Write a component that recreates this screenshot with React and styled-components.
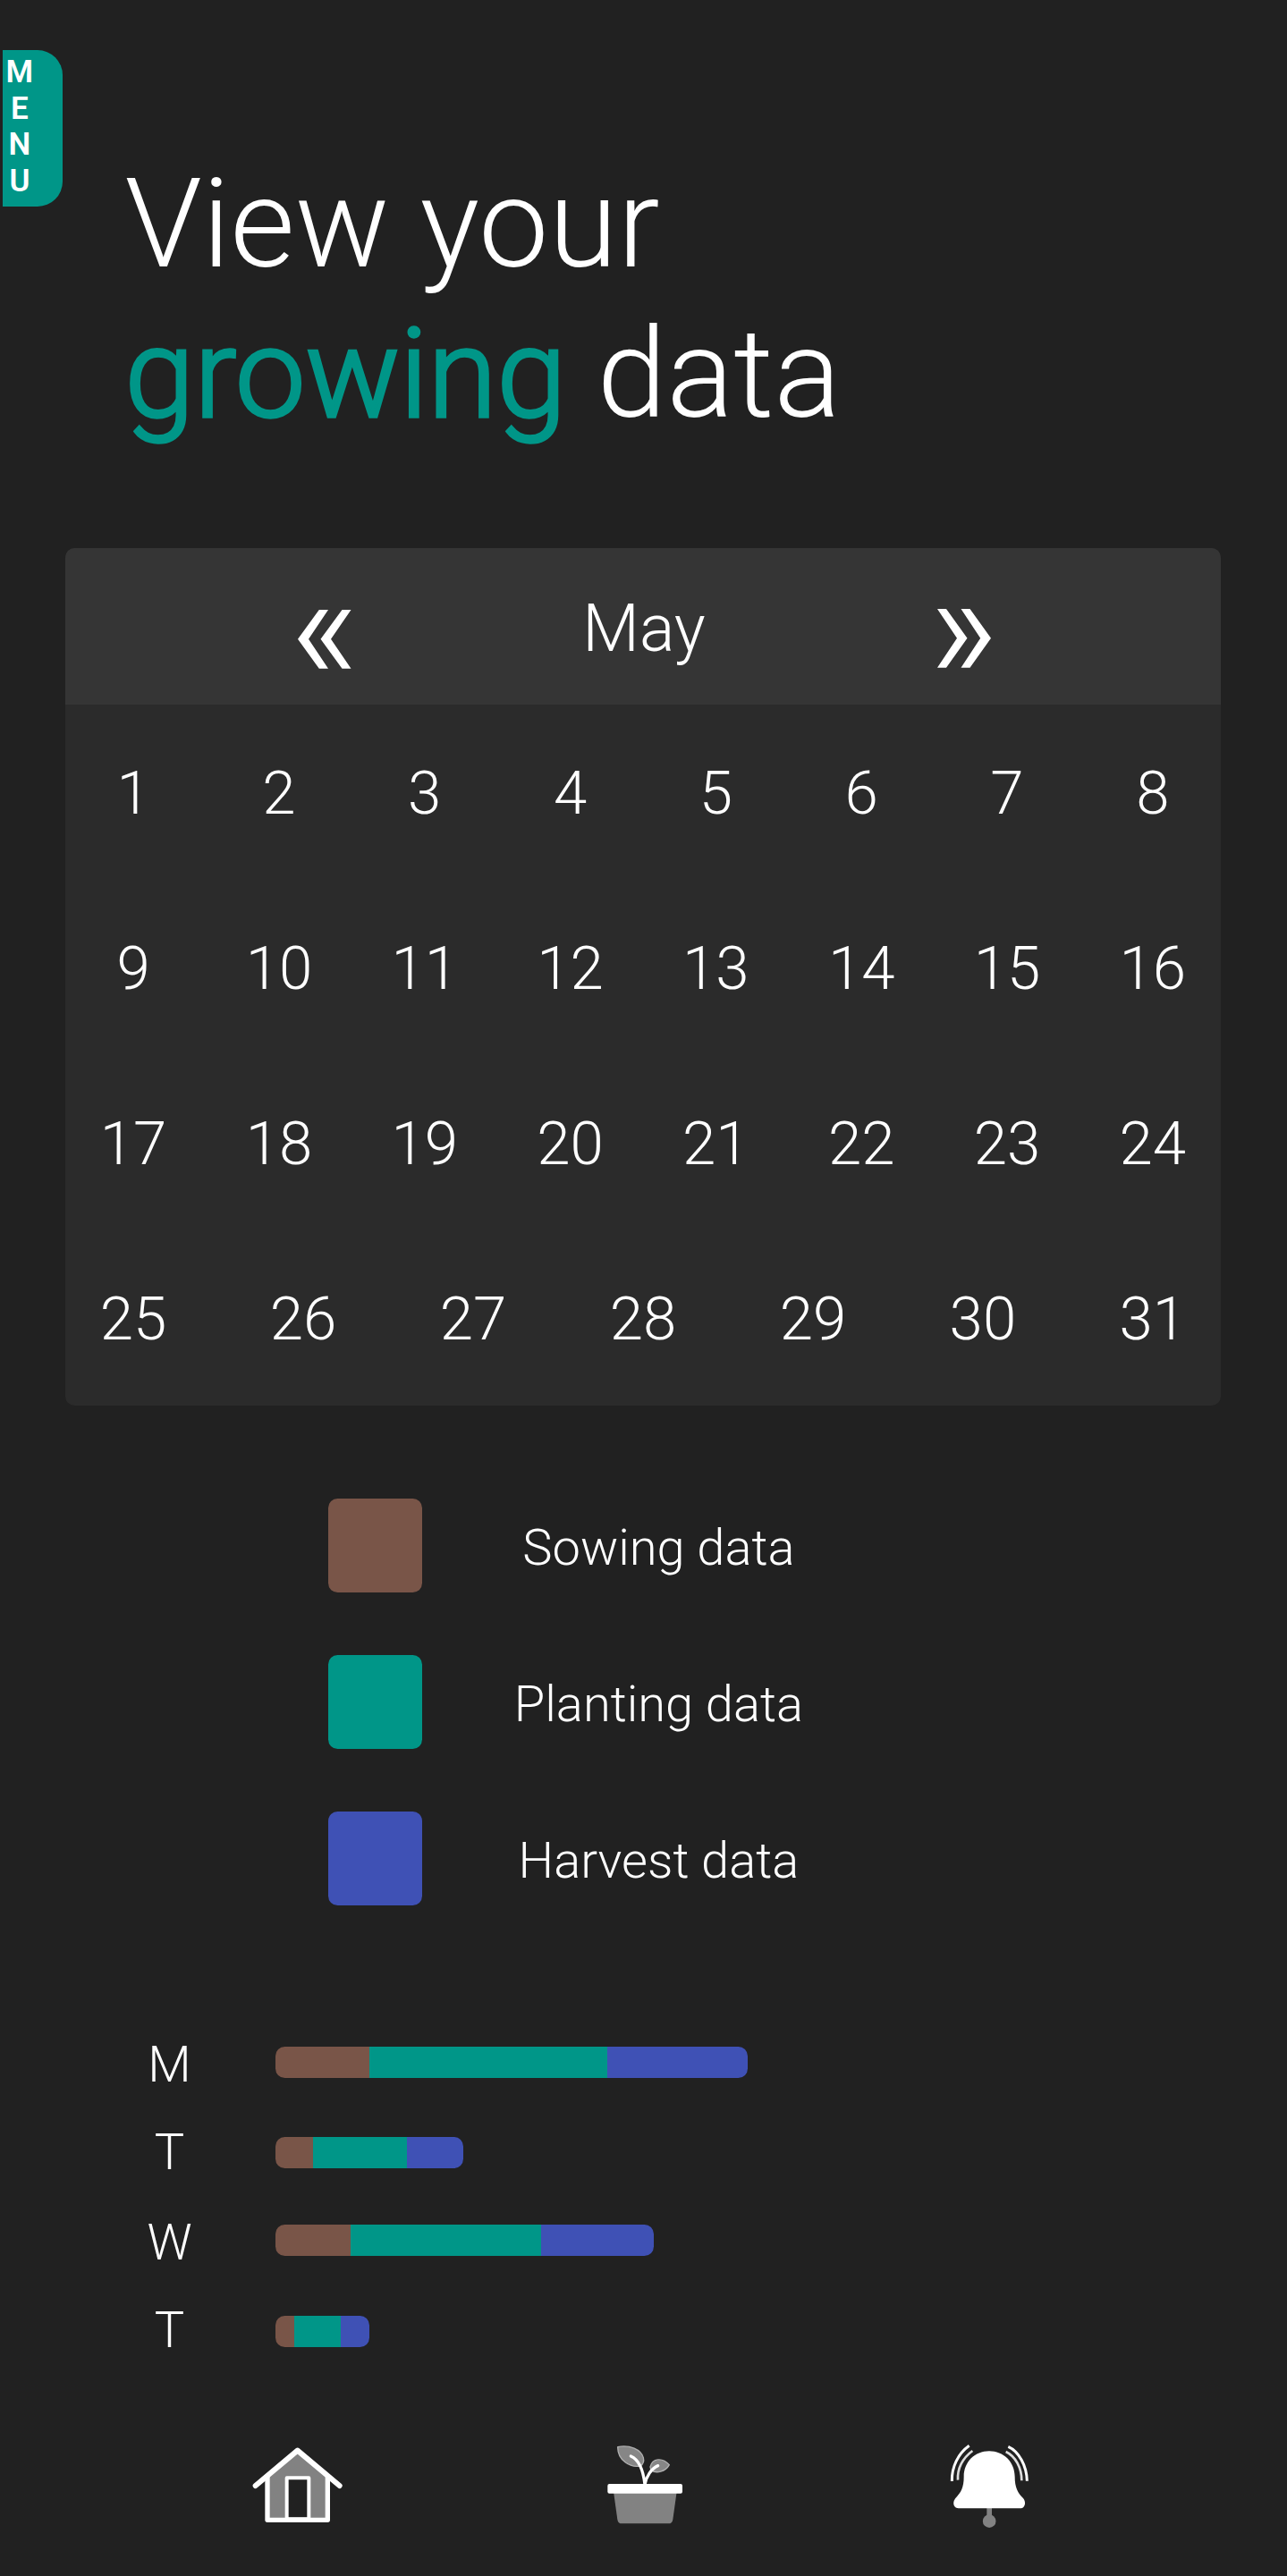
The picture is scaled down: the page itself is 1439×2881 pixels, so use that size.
import React from 'react';
import styled, { createGlobalStyle } from 'styled-components';

const GlobalStyle = createGlobalStyle`
  *, *::before, *::after { box-sizing: border-box; }
  body {
    margin: 0;
    background: #212121;
    color: #fff;
    font-family: Roboto, "Liberation Sans", sans-serif;
    font-weight: 300;
  }
  h1, ul { margin: 0; padding: 0; }
  ul { list-style: none; }
`;

const colors = { sowing: '#795548', planting: '#009688', harvest: '#3f51b5' };

const Page = styled.div`
  position: relative;
  display: flex;
  flex-direction: column;
  width: 1439px;
  height: 2881px;
  overflow: hidden;
`;

const MenuTab = styled.button`
  position: absolute;
  top: 56px;
  left: 3.4px;
  display: flex;
  flex-direction: column;
  align-items: center;
  width: 66.5px;
  height: 175px;
  padding: 5px 29.5px 0 0;
  border: 0;
  border-radius: 0 28px 28px 0;
  background: ${colors.planting};
  color: #fff;
  font: 600 35px/40.7px Roboto, sans-serif;
`;

const Title = styled.h1`
  margin: 166px 0 0 139.5px;
  height: 446.5px;
  font-size: 140px;
  font-weight: 300;
  line-height: 168px;
`;

const Accent = styled.span`
  color: ${colors.planting};
  -webkit-text-stroke: 3.5px ${colors.planting};
`;

const Calendar = styled.section`
  width: 1292px;
  margin-left: 73px;
  border-radius: 10.5px;
  background: #2b2b2b;
  overflow: hidden;
`;

const MonthBar = styled.header`
  display: grid;
  grid-template-columns: 577px 140px 1fr;
  align-items: center;
  height: 175px;
  background: #353535;
`;

const Month = styled.span`
  padding-top: 5px;
  font-size: 73.5px;
  line-height: 86px;
  text-align: center;
`;

const Arrow = styled.svg`
  display: block;
  width: 60px;
  height: 66px;
  margin-top: ${(p) => (p.$next ? 28 : 30)}px;
  margin-left: ${(p) => (p.$next ? 258 : 260)}px;
  fill: #fff;
`;

const Week = styled.div`
  display: flex;
  justify-content: space-between;
  height: 196px;
`;

const Day = styled.span`
  width: 152.25px;
  padding-top: 1px;
  font-size: 67.2px;
  line-height: 197px;
  text-align: center;
`;

const Legend = styled.ul`
  display: flex;
  flex-direction: column;
  gap: 70px;
  margin: 104.900px 0 0 367.4px;
`;

const LegendItem = styled.li`
  display: flex;
  align-items: center;
  height: 105px;
`;

const Swatch = styled.span`
  width: 105px;
  height: 105px;
  border-radius: 10.5px;
  background: ${(p) => p.$color};
`;

const LegendText = styled.span`
  width: 528px;
  padding-top: 5px;
  font-size: 56px;
  text-align: center;
`;

const Chart = styled.section`
  display: flex;
  align-items: flex-start;
  margin: 157.600px 0 0 140px;
`;

const DayLabels = styled.div`
  display: flex;
  flex-direction: column;
  width: 99px;
  margin-top: -12.5px;
`;

const DayLabel = styled.span`
  height: ${(p) => p.$height}px;
  font-size: 56px;
  line-height: 66px;
  text-align: center;
`;

const Bars = styled.div`
  display: flex;
  flex-direction: column;
  margin-left: 68.75px;
`;

const BarSlot = styled.div`
  height: ${(p) => p.$height}px;
`;

const Bar = styled.div`
  display: flex;
  width: fit-content;
  height: 35px;
  border-radius: 10.5px;
  overflow: hidden;
`;

const Segment = styled.span`
  width: ${(p) => p.$amount * 3.5}px;
  background: ${(p) => p.$color};
`;

const Nav = styled.nav`
  position: absolute;
  left: 0;
  bottom: 21px;
  width: 100%;
  height: 160px;
  display: flex;
`;

const NavIcon = styled.svg`
  flex: none;
  width: ${(p) => p.$width}px;
  height: 160px;
  margin-left: ${(p) => p.$gap}px;
`;

const weeks = [
  [1, 2, 3, 4, 5, 6, 7, 8],
  [9, 10, 11, 12, 13, 14, 15, 16],
  [17, 18, 19, 20, 21, 22, 23, 24],
  [25, 26, 27, 28, 29, 30, 31],
];

const legend = [
  ['Sowing data', colors.sowing],
  ['Planting data', colors.planting],
  ['Harvest data', colors.harvest],
];

const chart = [
  { day: 'M', labelHeight: 98, slot: 101.5, values: [30, 76, 45] },
  { day: 'T', labelHeight: 101, slot: 98, values: [12, 30, 18] },
  { day: 'W', labelHeight: 98, slot: 101.5, values: [24, 61, 36] },
  { day: 'T', labelHeight: 66, slot: 35, values: [6, 15, 9] },
];

const HouseIcon = () => (
  <NavIcon $width={180} $gap={250} viewBox="0 0 540 480">
    <path d="M147 200 L248 118 L349 200 V355 H147 Z" fill="#828282" />
    <path d="M212 214 H286 V352 H212 Z" fill="#212121" stroke="#fff" strokeWidth="12" strokeLinejoin="round" />
    <path d="M147 204 V355 H349 V204" fill="none" stroke="#fff" strokeWidth="16" strokeLinejoin="round" />
    <path d="M107 240 L248 122 L389 240" fill="none" stroke="#fff" strokeWidth="18" strokeLinecap="round" strokeLinejoin="round" />
  </NavIcon>
);

const PlantIcon = () => (
  <NavIcon $width={150} $gap={220} viewBox="0 0 450 480">
    <path d="M122 110 C162 102 200 118 208 146 C211 158 207 168 198 174 C164 181 122 155 122 110 Z" fill="#868686" stroke="#b0b0b0" strokeWidth="4" strokeLinejoin="round" />
    <path d="M231 177 C238 148 272 144 295 170 C282 194 251 200 234 188 Z" fill="#868686" stroke="#b0b0b0" strokeWidth="4" strokeLinejoin="round" />
    <path d="M166 141 C194 153 208 191 213 236 C218 209 235 182 257 173" fill="none" stroke="#fff" strokeWidth="10" strokeLinecap="round" />
    <path d="M108 260 H320 L307 353 Q305 367 292 367 H136 Q123 367 121 353 Z" fill="#828282" />
    <rect x="88" y="234" width="251" height="32" rx="6" fill="#fff" />
  </NavIcon>
);

const BellIcon = () => (
  <NavIcon $width={150} $gap={230} viewBox="0 0 450 480">
    <path d="M220 310 H237 V345 H220 Z" fill="#828282" />
    <circle cx="228.500" cy="359" r="22" fill="#828282" />
    <path d="M228 124 C276 124 314 160 314 210 C314 246 324 264 342 282 C354 297 347 316 332 316 H125 C109 316 103 297 115 282 C134 262 143 246 143 210 C143 160 180 124 228 124 Z" fill="#fff" />
    <path d="M103 225 C102 177 124 132 161 106" fill="none" stroke="#fff" strokeWidth="9" />
    <path d="M123 221 C121 183 139 148 172 123" fill="none" stroke="#ddd" strokeWidth="8" />
    <path d="M292 109 C328 125 354 174 355 224" fill="none" stroke="#fff" strokeWidth="9" />
    <path d="M284 126 C316 141 337 180 337 223" fill="none" stroke="#ddd" strokeWidth="8" />
  </NavIcon>
);

export default function App() {
  return (
    <>
      <GlobalStyle />
      <Page>
        <MenuTab>
          {[...'MENU'].map((letter) => (
            <span key={letter}>{letter}</span>
          ))}
        </MenuTab>
        <Title>
          View your
          <br />
          <Accent>growing</Accent> data
        </Title>
        <Calendar>
          <MonthBar>
            <Arrow viewBox="0 0 60 66">
              <path d="M23.800 0 H34 L12 32.700 L34 65.700 H23.800 L0 32.700 Z" />
              <path d="M49.500 0 H59.500 L37 32.700 L59.500 65.700 H49.500 L25.500 32.700 Z" />
            </Arrow>
            <Month>May</Month>
            <Arrow $next viewBox="0 0 60 66">
              <path d="M0 0 H10 L33.500 32.700 L10 65.700 H0 L22 32.700 Z" />
              <path d="M26.500 0 H36.500 L60 32.700 L36.500 65.700 H26.500 L48.200 32.700 Z" />
            </Arrow>
          </MonthBar>
          {weeks.map((days) => (
            <Week key={days[0]}>
              {days.map((day) => (
                <Day key={day}>{day}</Day>
              ))}
            </Week>
          ))}
        </Calendar>
        <Legend>
          {legend.map(([label, color]) => (
            <LegendItem key={label}>
              <Swatch $color={color} />
              <LegendText>{label}</LegendText>
            </LegendItem>
          ))}
        </Legend>
        <Chart>
          <DayLabels>
            {chart.map((row, i) => (
              <DayLabel key={i} $height={row.labelHeight}>{row.day}</DayLabel>
            ))}
          </DayLabels>
          <Bars>
            {chart.map((row, i) => (
              <BarSlot key={i} $height={row.slot}>
                <Bar>
                  <Segment $amount={row.values[0]} $color={colors.sowing} />
                  <Segment $amount={row.values[1]} $color={colors.planting} />
                  <Segment $amount={row.values[2]} $color={colors.harvest} />
                </Bar>
              </BarSlot>
            ))}
          </Bars>
        </Chart>
        <Nav>
          <HouseIcon />
          <PlantIcon />
          <BellIcon />
        </Nav>
      </Page>
    </>
  );
}
